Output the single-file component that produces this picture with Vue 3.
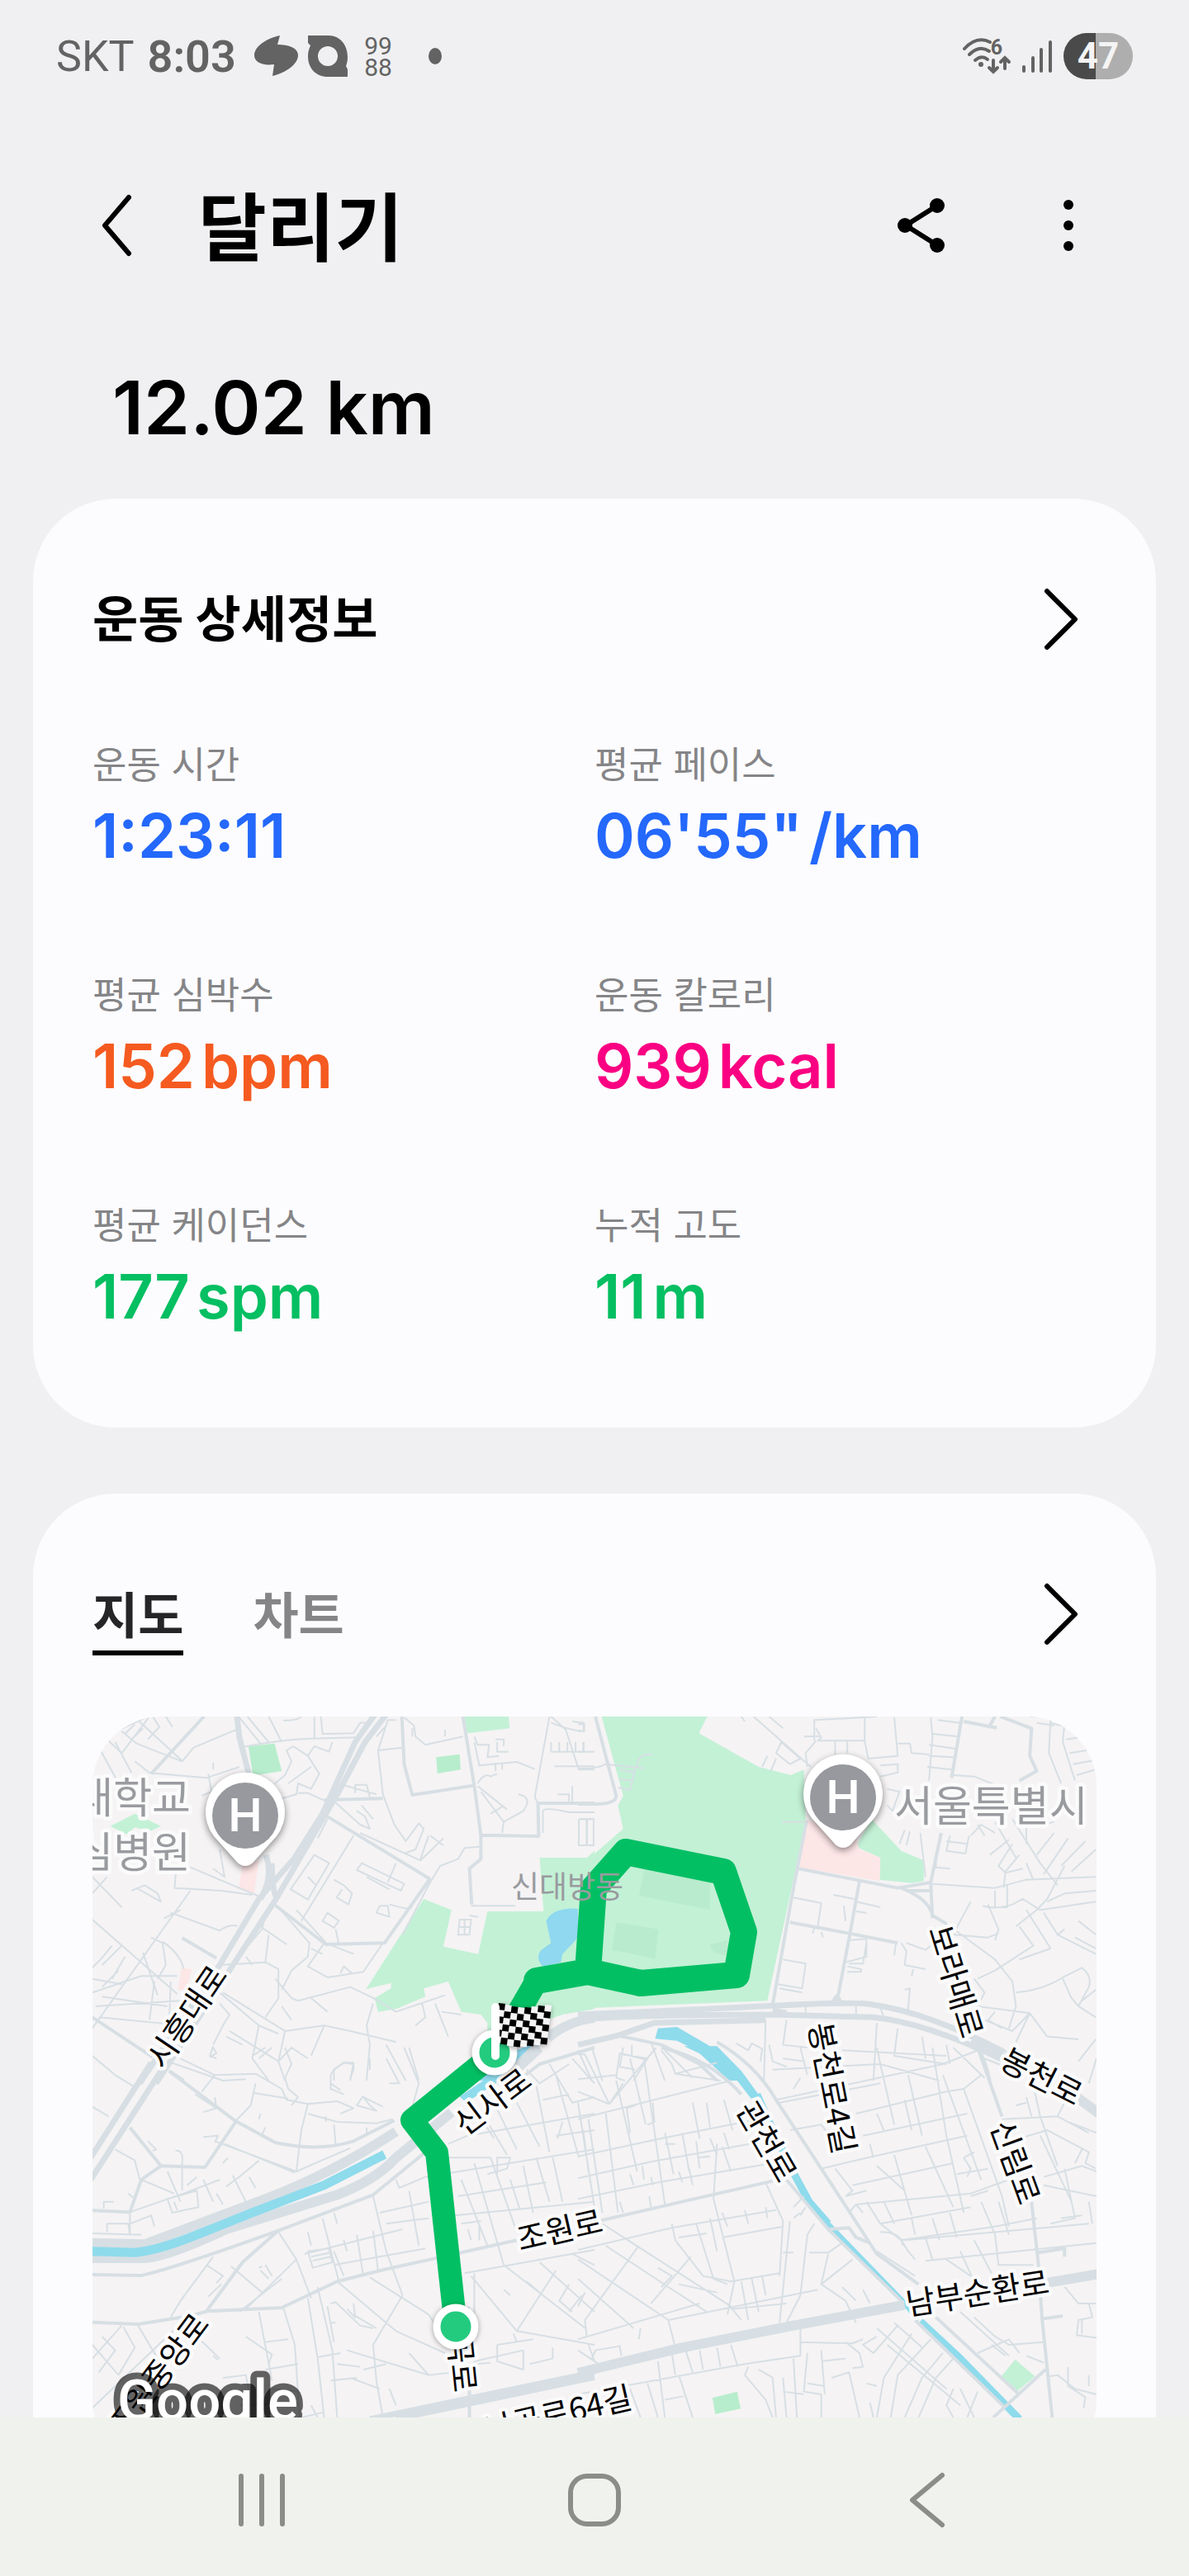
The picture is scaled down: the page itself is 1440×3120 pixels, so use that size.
<template>
  <div class="screen">
    <div class="status-bar">
      <div class="status-left">
        <span class="carrier">SKT</span>
        <span class="clock">8:03</span>
        <svg class="ico-swirl" viewBox="0 0 53 50" aria-hidden="true">
          <path d="M31 0C13 4 0 14 0 24c0 8 9 13 24 11l-2 14c16-4 31-14 31-25 0-9-11-13-25-13z" />
        </svg>
        <svg class="ico-q" viewBox="0 0 48 50" aria-hidden="true">
          <path fill-rule="evenodd" d="M0 0h25c14 0 23 12 23 26 0 5-1 8-2 11l2 4v9H24C10 50 0 40 0 25c0-5 1-8 3-13L0 9zM24 13a12 12 0 1 0 0 24 12 12 0 0 0 0-24z" />
        </svg>
        <svg class="ico-99" viewBox="0 0 34 50" aria-hidden="true">
          <text x="17" y="23" text-anchor="middle">99</text>
          <text x="17" y="49" text-anchor="middle">88</text>
        </svg>
        <span class="dot"></span>
      </div>
      <div class="status-right">
        <svg class="ico-wifi" viewBox="0 0 58 44" aria-hidden="true">
          <path d="M2 13Q17-3 33 5M8 20q12-12 24-4M15 27q8-7 15-1" />
          <circle cx="22" cy="32" r="3" class="solid" />
          <path d="M37 27v14M32 36l5 5 5-5M51 37V24M46 29l5-5 5 5" />
          <text x="41" y="20" text-anchor="middle">6</text>
        </svg>
        <svg class="ico-signal" viewBox="0 0 36 40" aria-hidden="true">
          <path d="M2 33v5M13 22v16M23 12v26M34 3v35" />
        </svg>
        <span class="battery">47</span>
      </div>
    </div>

    <header class="app-bar">
      <button class="icon-btn" aria-label="뒤로">
        <svg viewBox="0 0 96 96"><path d="M64 14L35 48l29 34" /></svg>
      </button>
      <h1>달리기</h1>
      <div class="actions">
        <button class="icon-btn" aria-label="공유">
          <svg viewBox="0 0 96 96">
            <path d="M67 24L29 48l38 24" />
            <circle cx="67" cy="24" r="9" /><circle cx="28" cy="48" r="9" /><circle cx="67" cy="72" r="9" />
          </svg>
        </button>
        <button class="icon-btn" aria-label="더보기">
          <svg viewBox="0 0 96 96" class="dots">
            <circle cx="48" cy="23" r="6" /><circle cx="48" cy="48" r="6" /><circle cx="48" cy="73" r="6" />
          </svg>
        </button>
      </div>
    </header>

    <main class="content">
      <p class="distance">12.02 km</p>

      <section class="card">
        <div class="card-head">
          <h2>운동 상세정보</h2>
          <button class="more-btn" aria-label="운동 상세정보 보기">
            <svg viewBox="0 0 88 88"><path d="M28 10l34 34-34 34" /></svg>
          </button>
        </div>
        <dl class="stats">
          <div v-for="s in stats" :key="s.label" class="stat">
            <dt>{{ s.label }}</dt>
            <dd :class="s.tone">{{ s.value }}<span v-if="s.unit" class="unit">{{ s.unit }}</span></dd>
          </div>
        </dl>
      </section>

      <section class="card">
        <div class="card-head">
          <div class="tabs" role="tablist">
            <button
              v-for="t in tabs"
              :key="t"
              role="tab"
              class="tab"
              :class="{ active: t === activeTab }"
              :aria-selected="t === activeTab"
              @click="activeTab = t"
            >{{ t }}</button>
          </div>
          <button class="more-btn" aria-label="지도 보기">
            <svg viewBox="0 0 88 88"><path d="M28 10l34 34-34 34" /></svg>
          </button>
        </div>

        <svg class="map" viewBox="0 0 1216 912" role="img" aria-label="달리기 경로">
          <rect width="1216" height="912" class="land" />

          <!-- areas first, so every road lies over them -->
          <g v-for="(tile, i) in tiles" :key="'a' + i" :transform="tile.at">
            <path v-for="(a, j) in tile.areas" :key="j" :d="a[1]" :class="a[0]" />
          </g>
          <g v-for="(tile, i) in tiles" :key="'r' + i" :transform="tile.at">
            <path v-for="(r, j) in tile.roads" :key="j" :d="r[1]" class="road" :class="r[0]" />
          </g>

          <g class="road-names">
            <text
              v-for="n in roadNames"
              :key="n.text + n.x"
              :transform="`translate(${n.x} ${n.y}) rotate(${n.turn})`"
              y="13"
            >{{ n.text }}</text>
          </g>
          <g class="place-names">
            <text x="119" y="117" text-anchor="end">대학교</text>
            <text x="119" y="183" text-anchor="end">심병원</text>
            <text x="971" y="127">서울특별시</text>
          </g>

          <g v-for="p in pins" :key="p.x" :transform="`translate(${p.x} ${p.y})`" class="pin">
            <path d="M0 61C-5 61-9 58-12 54L-38 25A48 48 0 1 1 38 25L12 54C9 58 5 61 0 61z" />
            <circle r="40" />
            <text y="19" text-anchor="middle">H</text>
          </g>

          <path class="route" d="M440 739L417 528 387 489 487 408 538 320 600 309" />
          <path class="route loop" d="M538 320L600 309 607 208 646 164 764 188 789 261 780 313 664 323 600 309" />
          <text class="district" x="507" y="220">신대방동</text>

          <circle class="marker" cx="440" cy="739" r="23" />
          <circle class="marker" cx="487" cy="407" r="23" />
          <g class="flag" transform="translate(492 347) rotate(7)">
            <rect
              v-for="c in flagCells"
              :key="c.x + '-' + c.y"
              :x="c.x"
              :y="c.y"
              width="8"
              height="8"
              :class="{ dark: c.dark }"
            />
          </g>
          <path class="pole" d="M488 352v59" />

          <text class="brand" x="30" y="852">Google</text>
        </svg>
      </section>
    </main>

    <nav class="nav-bar">
      <button aria-label="최근 앱">
        <svg viewBox="0 0 72 72"><path d="M11 7v58M36 7v58M61 7v58" /></svg>
      </button>
      <button aria-label="홈">
        <svg viewBox="0 0 72 72"><rect x="7" y="7" width="58" height="58" rx="20" /></svg>
      </button>
      <button aria-label="뒤로 가기">
        <svg viewBox="0 0 72 72"><path d="M54 6L18 36l36 30" /></svg>
      </button>
    </nav>
  </div>
</template>

<script setup>
import { ref } from 'vue'

const tabs = ['지도', '차트']
const activeTab = ref('지도')

const stats = [
  { label: '운동 시간', value: '1:23:11', tone: 'blue' },
  { label: '평균 페이스', value: '06\'55"', unit: '/km', tone: 'blue' },
  { label: '평균 심박수', value: '152', unit: 'bpm', tone: 'orange' },
  { label: '운동 칼로리', value: '939', unit: 'kcal', tone: 'pink' },
  { label: '평균 케이던스', value: '177', unit: 'spm', tone: 'green' },
  { label: '누적 고도', value: '11', unit: 'm', tone: 'green' }
]

const pins = [
  { x: 185, y: 120 },
  { x: 909, y: 98 }
]

const roadNames = [
  { text: '시흥대로', x: 115, y: 364, turn: -56 },
  { text: '신사로', x: 485, y: 467, turn: -37 },
  { text: '조원로', x: 566, y: 623, turn: -13 },
  { text: '조원중앙로', x: 80, y: 798, turn: -53 },
  { text: '난곡로', x: 445, y: 766, turn: 84 },
  { text: '난곡로64길', x: 564, y: 845, turn: -13 },
  { text: '봉천로4길', x: 895, y: 450, turn: 79 },
  { text: '보라매로', x: 1045, y: 321, turn: 73 },
  { text: '봉천로', x: 1149, y: 437, turn: 27 },
  { text: '관천로', x: 816, y: 515, turn: 60 },
  { text: '신림로', x: 1117, y: 540, turn: 70 },
  { text: '남부순환로', x: 1072, y: 699, turn: -9 }
]

// each column sits a little lower or higher, which gives the flag its wave
const flagWave = [0, 1, 2, 2, 1, -1, -3, -5]
const flagCells = []
flagWave.forEach((lift, col) => {
  for (let row = 0; row < 6; row++) {
    flagCells.push({ x: col * 8, y: row * 8 + lift, dark: (row + col) % 2 === 0 })
  }
})

// four map tiles, each in its own grid: north-west, north-east, south-west, south-east
const tiles = [
  {
    at: 'translate(-12 -19) scale(.3954 .3333)',
    areas: [
      ['park', 'M1400 570H1568V1120L1470 1140 1240 1240 1240 1170 1220 1140 1160 1130 1120 1020 1045 1045 1050 1075 960 1120 905 1130 895 1080 945 1045 945 1025 868 1048 1045 720 1130 760 1105 893 1212 920 1240 765 1412 765z'],
      ['park', 'M1568 545L1540 575V620H1568z'],
      ['park-dark', 'M508 165L588 155 610 255 522 272zM1083 205L1155 194 1158 250 1087 264z'],
      ['park', 'M1170 57H1305L1308 100 1178 118zM85 455L160 410 240 455 205 475 160 460 135 485z'],
      ['lake', 'M1420 800Q1440 750 1515 755L1540 800 1510 870 1470 920 1465 950 1410 965Q1385 935 1405 905L1435 880z'],
      ['lake', 'M1210 1380L1330 1270 1390 1240 1290 1380z'],
      ['clinic', 'M490 590L540 580 525 700 478 685zM303 970L335 975 318 1050 292 1050z']
    ],
    roads: [
      ['wide', 'M895 50L835 150 735 410 650 570 540 720 420 960 175 1390M930 50L865 150 780 340 590 725 450 980 225 1390'],
      ['wide', 'M473 57L480 130 510 270M562 560Q585 640 545 720M580 590Q580 680 592 710'],
      ['wide', 'M1568 1145Q1470 1160 1400 1240L1270 1390M1568 1160Q1490 1170 1430 1230'],
      ['mid', 'M372 57L210 265M978 57L985 230 1010 342 1195 308M1165 57L1200 310 1220 488 1397 492 1395 372H1568M1220 490V575L1185 610 1192 740M735 410L1065 648M585 738L745 885 925 880 1065 645M305 862L410 935M30 1150L215 1295M265 1345L310 1380M740 360L920 355'],
      ['thin', 'M480 60L545 155M505 57L570 150M570 57L610 150M710 57V135M480 170Q610 140 700 137L845 133M730 57L735 120 830 118 850 80 880 80M615 72Q660 72 670 57M765 150L755 185 710 165 690 200 645 165 625 180 640 220 620 270 590 300M690 200L725 265 700 320 660 300 655 340 610 355M660 335L690 335 745 365M630 300L700 240'],
      ['thin', 'M30 150L200 57M75 140L120 190 205 57M120 110L165 155 305 220 340 170 480 100M160 60L305 218M215 57L235 95 200 140M255 57L275 95M100 150L150 262M55 180L115 310M160 220L205 262 380 280 480 240M385 265L395 330 365 345M400 225L400 250M130 120L160 85M150 140L185 100'],
      ['thin', 'M978 170L905 180 920 340 955 450 990 510 1030 445 1045 465 1020 540 985 555M905 180L935 70 960 70M900 130L930 90M985 60L1015 90 1020 130 1050 160 1165 130M1110 105V130M1010 100V130M1200 130L1210 160H1245L1240 205 1275 200M1200 150L1215 235 1330 222 1385 248M1270 150V185H1305M1265 140H1290V165M1265 225V255M1285 225V250M1210 300Q1230 260 1250 275L1270 265M1210 310L1300 395M1335 340Q1380 350 1350 400L1290 440 1285 480M1220 330L1290 440M1250 410L1285 385'],
      ['thin', 'M1430 57L1385 350 1395 372M1435 57L1480 105 1520 250H1568M1435 80Q1500 110 1535 110V80L1500 75M1435 185H1568M1435 150V185M1460 150V185M1485 150V185M1510 150V185M1535 150V185M1445 238H1568M1455 340H1490V365M1500 310V365M1410 480V400Q1415 385 1490 405H1568M1520 430V525H1568M1545 430V525M1520 430H1568'],
      ['thin', 'M835 335V305H870L880 350M775 370L850 450 880 465 865 420 840 400M780 300L900 340M855 380L890 430M850 480L1035 580 1105 500M1065 490L1105 525M1060 490L1035 575M1215 530L1170 535 1150 575 1095 600 1060 670 980 850M750 430L720 500M830 490L670 800M960 590L935 660M710 560L755 590 690 722 637 685zM690 640L715 670M855 590L985 665 975 690 840 615zM870 640L940 685M770 650L800 670 825 700 815 740 778 715 795 685M940 740L990 755 1010 750M935 745L940 785 900 770 910 745zM750 770L785 800 770 825 735 800zM775 830L785 885'],
      ['thin', 'M30 640L120 750M75 640L30 700M165 680L240 730 230 700 190 670 150 690M300 590L540 710M420 540L435 640 400 610M285 630L282 680 425 690 520 705M330 690L30 1190M30 795L290 1065M250 790L300 760M270 770L420 835Q450 810 475 818M210 860L245 880 255 960 230 1010M245 875Q300 920 310 975M185 915L230 1070M90 890L55 940 30 970M120 890L60 960M130 930L90 1010M110 980L60 1040M420 960L560 950 600 975V1080L560 1150M470 940L550 830 560 770M545 820L625 885M600 750L695 880 690 930 640 980 610 1050M500 930L520 960M570 850L560 950M655 760L750 885M740 880L690 965 750 1005 860 985 920 880M700 900L735 920M765 890L830 920M790 990L800 965 825 990'],
      ['thin', 'M1185 780L1212 785M1155 795H1190L1185 850H1150zM1170 795V850M1150 822H1188M1190 745H1325'],
      ['thin', 'M40 1110L300 1090M60 1075L260 1110M50 1150L270 1175M30 1060L180 1000 290 1000M270 1020L265 1180M220 1020L205 1160M400 1040L540 1180 600 1210M420 1100L450 1140 430 1180 400 1250M430 1060L620 1200 740 1180 820 1200 960 1240M590 1010L640 1080 660 1090 820 1040 890 1080 960 1130M700 1080L750 1130M610 1110L640 1160M960 1130L1110 1070M1040 1100L1050 1150 1020 1180M1080 1100L1120 1220M1100 1130L1160 1140M890 1100L870 1180 880 1250M450 1200L600 1310 640 1260 690 1300M540 1180L520 1300 570 1380M400 1255L390 1290 410 1300M440 1220L490 1250M620 1200L600 1310 620 1380M770 1380V1340L800 1315H830L820 1380M880 1250L870 1380M930 1250L990 1380M1000 1260L1030 1380M740 1180L700 1290M330 1150L300 1240M260 1310L430 1380 500 1375M30 1010L120 1030']
    ]
  },
  {
    at: 'translate(588 -19) scale(.4209 .3333)',
    areas: [
      ['park', 'M68 57H372L348 118 520 240 612 270 650 250 655 430 625 620 545 1090 0 1118V575H30L130 465 115 380 130 345z'],
      ['park', 'M845 430L930 545 995 580V655L960 662 868 650 870 570 800 530z'],
      ['clinic', 'M655 430L800 500 810 540 870 570 868 655 638 605z'],
      ['park-shade', 'M190 610L380 660V760L176 708zM110 805L232 830 222 937 97 905zM380 885L430 870V925Q380 920 380 885z'],
      ['river', 'M230 1190L285 1185 380 1255 430 1310 485 1380H435L340 1270 285 1235 222 1228z']
    ],
    roads: [
      ['wide', 'M0 1140Q300 1125 560 1108T850 1105Q1000 1130 1225 1275M0 1160Q160 1140 560 1140L850 1150Q1000 1170 1215 1300M560 1125L600 1135M0 1250L110 1218 220 1170 540 1160'],
      ['mid', 'M658 435L620 680 560 1105M635 610L920 680 1015 660 1045 480M810 655L785 830 745 1095M610 805L780 845 920 880M930 680Q1010 720 1020 780L1060 810M950 690H1015M1015 660L1020 790M1105 57L1075 280M1110 75L1205 98M1215 57L1305 100 1300 200 1320 255 1270 290M1185 90L1200 57M50 57L110 345Q110 372 60 375H0M1135 1230Q1170 1290 1185 1380M110 1215L240 1250 350 1320 400 1380M745 1070L730 1100M745 1070L760 1100'],
      ['thin', 'M0 85H18V110H0M15 150V185H0M0 245Q50 250 80 230L190 245M170 240Q170 190 215 195M165 240L150 325 115 315M120 250L165 260M118 285L160 290M5 430H45V525H5M25 430V525M585 440H650'],
      ['thin', 'M470 57L480 75M505 57L670 240M550 57L590 100M585 150L640 210 610 230 570 190zM530 240L545 200M555 255L570 210M650 130L695 128M680 145L680 70 860 57M685 100L700 135 690 145H825V57M685 145L655 190 660 240M740 145V205M775 145V190M825 145L835 210 920 200 910 60M920 155H955L960 190 1010 195M870 235L920 230V260L870 275M1015 60L1020 130 1010 290M1035 70L1100 80M1020 120L1095 130M1010 160L1090 175M1010 200L1080 205M1005 240L1075 250M890 320L925 330 905 400 890 380M940 470L925 520M955 475L945 525'],
      ['thin', 'M1300 57L1360 57 1355 190 1390 300M1360 80L1420 100M1400 80L1395 150 1430 290M1430 110L1460 90M1405 140L1480 125M1415 190L1490 175M1425 230L1490 215M1435 270L1490 250M1320 80L1370 90M1080 270L1140 275 1210 310M1200 440L1260 570M1250 430L1330 590M1290 440L1290 520M1200 480L1160 450 1130 490M1150 450L1170 490M1070 490L1060 545 1115 555 1125 490M1060 510L1120 520M985 480L1000 640M1030 570L1030 605 1070 610M1020 665L1200 680 1290 650 1490 640M1240 505L1185 560M1250 520L1210 600 1230 625 1280 610M1270 560L1230 620 1225 680M1235 670V750H1210M1200 690V750M1290 590L1310 650M1330 590L1380 670M1370 480L1320 560M1410 500L1340 630M1460 510L1390 600M1490 540L1420 620M1310 460L1370 440M1400 600L1350 720 1320 760 1260 820M1490 690L1400 700 1350 730M1165 745Q1200 760 1250 740L1280 720 1330 760 1490 730'],
      ['thin', 'M620 715L700 735 690 820M735 705L795 720M765 745L770 800M800 730L870 750M800 765L830 770M680 825L675 845M700 840L705 860M780 870L830 865V930L770 950M830 880L820 955H780M775 965L815 975V985H775M590 940L655 955 645 1045 575 1030M580 1045L645 1060M915 880L910 925M930 880L945 910 940 960 1000 975M945 880L1000 905 1050 850M965 975L960 1000M940 1050L955 1045 950 1120 935 1130M870 1115L880 1150 905 1160M655 1110V1145M800 1110V1140M1130 730L1100 800 1080 850 1180 860 1210 845M1060 810L1200 940 1250 1020 1260 1110 1240 1190M1180 740L1210 830 1200 870M1270 820L1310 890 1200 980 1150 1010M1290 760L1360 900M1340 770L1380 850 1490 920M1360 900L1270 940M1380 850L1400 830M1430 860L1490 900M1440 800L1490 850M1140 1010L1170 1060 1150 1110 1300 1135 1250 1200 1170 1160M1260 1060Q1340 1050 1395 1005L1450 970Q1480 1000 1470 1040L1440 1110 1420 1080 1395 1010M1440 1110L1490 1150M1300 1135L1350 1220 1440 1230M1300 1135L1260 1240M1490 1050L1450 1090M1200 1130L1180 1160 1220 1190'],
      ['thin', 'M540 1160L535 1380M455 1245L490 1270 500 1245 530 1265 525 1310M600 1160L590 1250 660 1260M860 1170L850 1380M920 1190L910 1290 1060 1320M990 1220L1000 1300M1060 1250L1070 1320M760 1270L1060 1290M590 1300L650 1310M550 1250L560 1310 600 1330M1170 1300L1230 1330M0 1270L40 1380M40 1260L70 1380M130 1260L120 1330 165 1340M130 1285L200 1300 160 1380M210 1240L250 1380M250 1270L330 1370M155 1250V1290M1490 1230L1440 1310']
    ]
  },
  {
    at: 'translate(-12 401) scale(.3954 .3333)',
    areas: [
      ['river', 'M1155 178L1340 30 1400 0 1290 110 1175 200z']
    ],
    roads: [
      ['bank', 'M20 710L190 715Q360 640 560 550T960 305M20 765H190Q260 760 440 660L780 535Q900 480 960 400L1130 235M1300 110L1400 0'],
      ['water', 'M20 740L160 745Q220 740 330 690L520 600 740 500 925 388'],
      ['wide', 'M210 55L25 400M240 85L25 480'],
      ['wide', 'M880 1350L1568 1180M960 1350L1568 1198'],
      ['mid', 'M20 825L180 828Q260 810 600 665L890 535 1050 380M270 90L470 268 590 345Q720 380 830 340L955 265M470 268L375 435 240 430 145 290M240 430L180 480 145 598 30 592M30 998L170 1005 330 975 380 958 610 945 780 850 920 808 1330 700M595 670L490 780 375 965M1185 1230V1344M1280 170L1400 60 1568 0'],
      ['thin', 'M30 30L100 100 155 140M30 215L80 250M400 0L410 20 390 35M300 40L405 100 365 160M405 100L530 95 610 150 625 190 690 205 780 195 830 220 790 240M405 180L410 220 370 235M345 170L410 220M530 130L515 210 470 265M525 165L630 185M620 0L640 60 620 110 630 150 660 180 640 210M690 205L670 300 655 450M690 240L780 270 900 275 950 260M545 240L540 260M560 290L550 315M745 250V270M770 280L775 350M860 175L840 210 900 230 880 210 860 180 920 215M760 100L770 80 800 55 830 60V80L820 110M760 100V150L800 170M760 130L790 155M930 40L970 130 940 130M880 40V80M985 0L1030 130 1010 215M870 290V315M520 30L560 0M540 40L580 0'],
      ['thin', 'M100 370L160 410 175 480M200 340L225 370 215 375M285 375Q310 370 305 420V520M370 325L415 320 405 345M405 340L655 450 820 365M435 350L650 455M445 400L430 420M540 410L480 470 440 505M260 450L300 560M180 480L280 530M350 470L320 500M145 598L310 530 420 480M75 670V640L140 640 145 680M145 640L210 610 220 650M145 600V680M30 675L180 680M65 585V560L95 560M140 530L155 545M260 550L350 520 355 580 275 600zM280 560L290 590M460 465L500 560M510 470L530 510M410 530L430 570M370 480L400 560'],
      ['thin', 'M890 540L930 740 980 900M960 480L970 510 1050 470 1568 370M910 600L1060 560M1000 520L1030 720M930 640L1060 620M690 670L700 720M600 670L655 770 700 910M735 620L785 850M770 600L780 640M690 740L755 730 765 780 705 800zM700 760L760 745M705 775L760 760M800 700L810 740M680 750L980 660M840 680L860 830M890 665L905 810M770 790L1050 730M770 740L800 830M550 795L540 800M545 810L570 840M560 790L580 830M455 795L550 890M380 790L430 830 410 855M425 860L385 905M270 980L300 920 400 760M330 970L30 1310M610 840L480 960M655 770L500 950M540 960L580 1210M615 945L650 1080 665 1344M690 910L720 1130 740 1344M720 870L765 1100 780 1344M560 1070L630 1060M720 1125L790 1110M980 900L890 1080 900 1210 920 1344M780 850L960 1030 1110 1110M880 835L1060 970 1110 1060'],
      ['thin', 'M750 940L770 1070M760 930L775 925 850 1010 890 1020M810 950L835 980 830 930M835 975L900 1020M760 1000H775M780 1150L850 1160M860 1170L930 1150M760 1210L840 1200M30 1080L110 1190M60 1050L100 1100 50 1180M125 1015L160 1090 110 1190M170 1010L230 1130M120 1010L30 1130M350 1050L420 1130M400 1120L415 1135M500 1050L580 1115 570 1150M430 1200L500 1190 510 1250M560 1170L660 1150M580 1240L660 1250M480 1300L660 1290M820 1200L910 1240M1060 1190L810 1100M1000 1110L1060 1190 1140 1180M940 1240L960 1300'],
      ['thin', 'M1070 400L1250 400M1160 480L1240 720M1200 420L1290 790M1250 400L1330 670M1240 460L1300 440 1310 400 1270 400V460M1310 480L1340 590M1350 430L1380 600M1390 400L1430 560M1440 400L1470 560M1140 610L1568 560M1150 540L1420 490M1160 640L1220 630M1180 660L1190 700M1215 640V700M1120 350L1180 320M1180 320L1568 240M1190 200L1260 330M1230 250L1300 390M1260 200L1330 370M1330 200L1400 360M1390 140L1430 380M1450 100L1520 400M1360 80L1400 130 1490 60M1430 60L1500 200 1568 180M1500 40L1568 130M1410 190L1490 170M1450 320L1568 300M1455 330L1470 270'],
      ['thin', 'M1170 820L1568 735M1190 830L1330 1030 1568 1080M1200 820V1140L1350 1100M1290 790L1540 1020M1400 780L1568 960M1450 810L1330 1030M1290 880L1310 900M1360 850L1400 890M1490 860L1460 920 1500 960M1530 900L1490 960M1270 1080L1380 1060M1270 1080V1140L1350 1170V1100M1440 1090V1130L1370 1150M1550 1080L1568 1140M1320 1040L1330 1070M1210 1150L1250 1145M1500 750L1568 790M670 1344L740 1325M700 1300L720 1344']
    ]
  },
  {
    at: 'translate(588 401) scale(.4209 .3333)',
    areas: [
      ['river', 'M305 -5H400L470 85 522 175 498 185 455 115 390 45z'],
      ['park', 'M1258 1133L1315 1195 1262 1250 1218 1195z'],
      ['park-dark', 'M387 1273L458 1250 468 1312 395 1332z']
    ],
    roads: [
      ['river-line', 'M515 170Q560 300 620 455L665 560 720 640'],
      ['river-line slim', 'M700 615L930 915 980 990'],
      ['river-line', 'M985 995L1100 1130 1270 1350'],
      ['bank', 'M0 1182L300 1090 620 1010 940 935M1350 855L1510 820'],
      ['bank', 'M1130 -20L1230 40M1430 175L1510 250'],
      ['mid', 'M240 0Q380 40 470 170M600 480L720 660 930 920M400 -20Q510 60 570 190L700 440 860 750 980 860M720 660L780 655 800 690 840 710M970 990L1230 1310M1030 980L1265 1255M60 630L300 560 560 485M1150 0L1220 250M1305 560L1325 790 1335 980 1365 1350M1325 745L1400 730V760M1340 985L1395 975M1345 1170L1195 1344'],
      ['thin', 'M0 115L110 100M0 25H20L90 205 225 0M0 160L90 205 130 130M120 20L110 110 135 120M120 20L200 45M240 10L270 60 280 95 400 55M280 95L410 120M0 260L250 180 440 120M0 395L240 330 500 265M0 475L210 415 540 340M0 550L230 490 560 420M0 735L270 655 570 590M30 260L70 600M80 240L115 600M110 120L170 450M190 40L250 570M150 40L195 280M165 210L140 220 150 310M215 200L220 270 200 280M330 200L350 330M370 200L380 290M420 190L445 300M250 310L275 460M300 310L320 450M345 400L380 395M340 340L350 440M380 330L400 390M420 310L435 370M0 200L50 600M15 300L30 450M150 460L160 500M185 430L190 480M210 470L215 500M250 350H280'],
      ['thin', 'M400 350L390 550 450 850 430 970M415 360L440 450M540 490L590 630 580 830M290 450L300 490M320 440L330 500M120 560L130 600M205 540L210 580M270 640L280 700 360 830 440 850M340 640L390 840 430 860M380 620L400 740M415 690L590 650M290 690L370 675M415 600L430 650M480 590L490 640M540 580L545 620M650 540L620 580M640 600L620 620M655 580L640 610M610 630L580 1000M680 640L660 680 640 900 600 1000M590 745H620M665 745H720L760 710M720 750L700 860 770 920 800 1000M700 860L790 770M440 850L580 820M470 850L490 990M500 840L520 960M530 830L540 900M430 930L470 990M440 950L600 930M350 930L0 1060M690 880L260 990 280 1090M760 870L800 920M820 880L840 930'],
      ['thin', 'M70 640L230 770 440 940M80 720L260 870 370 960M0 770L260 990M0 840L160 1020M175 720L20 990M325 760L210 930M230 800L270 830 240 870M290 860L400 890M20 890L0 940M20 990L25 1050M180 1020L175 1060M40 1130L50 1100 120 1085 125 1120M0 1100L60 1150M230 1140L250 1344M270 1110L280 1190M310 1100L330 1180M350 1100L360 1170M400 1090L410 1160M440 1080L460 1160M0 1260L480 1150 640 1120M150 1240L180 1344M200 1220L230 1344M290 1190L330 1344M250 1280L310 1265M480 1190L540 1280 560 1344M490 1160L480 1190M520 1170L560 1200 570 1344M590 1200L600 1344M620 1130L630 1344M660 1110L650 1250 700 1260 700 1344M700 1100L710 1260M770 1070L810 1110 820 1160 790 1165M640 1070L790 1075 820 1060M640 1120V1010M700 1140L770 1130M660 1220L710 1230M730 1200L780 1180 810 1344M590 1250L650 1260'],
      ['thin', 'M560 80L870 60 1040 120M580 200L870 130M610 300L700 280 730 330M570 190L1050 60 1170 0M620 150L640 110M640 0L660 100M860 0L870 60 910 280M1020 0L1060 320M1080 0L1170 110M950 100L990 320M800 240L1060 160 1110 150M820 320L1120 240M700 440L850 395 1120 320M850 400L840 350M860 240L880 300M940 190L960 300M1110 150L1220 540M1060 320L1110 600M1000 360L1080 580M910 390L960 610M860 430L940 520M1050 100L1160 480M740 440L790 520 770 540M700 440L740 510M790 500L1080 420M800 570L1130 530 1240 480M770 540L830 520M820 600L800 570 780 600M830 560L870 640 1130 580M880 560L910 640M960 620L970 680M1020 620L1040 700M1070 600L1090 690M870 640L930 700 1200 650 1320 620M940 700L1470 640M1000 775L1492 710M1000 690L1020 770M930 700L950 740 970 770M860 740L970 830M870 670Q930 670 935 720M1060 770L1130 830M1100 740L1140 850M1140 700L1190 820M1160 560L1200 680 1210 790 1310 790M1220 540L1240 650'],
      ['thin', 'M1305 250L1290 180M1300 80L1330 250 1380 430M1220 260L1380 250 1470 310M1380 250L1420 150M1410 270L1492 310M1260 210L1290 200M1270 330L1350 300 1470 380 1460 420 1490 440M1330 320L1420 560M1340 470L1450 430 1492 450M1340 500L1492 540M1400 440L1430 620 1360 640M1390 620L1450 610M1470 560L1480 640M1430 420L1450 370M1130 540L1180 520M1110 400L1130 440 1120 470M1140 380L1110 400M1210 560L1240 680M1160 100L1110 150M1210 0L1300 60M1090 460L1180 440M1470 130L1492 40'],
      ['thin', 'M860 1020L1060 1240M910 1000L990 1090M860 1050L820 1080 850 1110 920 1010M960 1040L880 1200 860 1344M1015 1060L920 1190 900 1344M1050 1110L990 1200 940 1344M1080 1130L1030 1200 980 1344M890 1080L1100 1300M1080 1240L1060 1300 1080 1344M1100 1240L1140 1344M1150 1250L1120 1344M1140 980L1200 1050 1240 1080 1340 1070M1100 960L1240 1120M1150 1110L1240 1060M1190 1080L1230 1120M1240 1060L1270 1110M1290 1120L1340 1145M1400 870L1440 930 1490 930M1470 930L1480 980 1440 990 1435 1045 1492 1055M1450 990V1040M1355 1195L1380 1190 1430 1240 1492 1260M1410 1160V1230L1460 1270 1455 1310M1470 1190V1230M840 1290L850 1344M830 1220L860 1230']
    ]
  }
]
</script>

<style>
html,
body,
#app {
  height: 100%;
}

body {
  margin: 0;
  background: #f0f0f2;
}
</style>

<style scoped>
.screen {
  display: flex;
  flex-direction: column;
  height: 100%;
  overflow: hidden;
  background: #f0f0f2;
  color: #000;
  font-family: Inter, 'Noto Sans CJK KR', sans-serif;
}

h1,
h2,
p,
dl,
dd {
  margin: 0;
}

button {
  padding: 0;
  border: 0;
  background: none;
  color: inherit;
  font: inherit;
  cursor: pointer;
}

svg {
  display: block;
}

/* status bar */
.status-bar {
  display: flex;
  flex: none;
  align-items: center;
  justify-content: space-between;
  height: 136px;
  padding: 0 68px;
  color: #636363;
  font-family: Roboto, sans-serif;
  font-size: 52px;
}

.status-left,
.status-right {
  display: flex;
  align-items: center;
}

.carrier {
  margin-right: 16px;
}

.clock {
  margin-right: 22px;
  font-size: 54px;
  font-weight: 600;
}

.ico-swirl,
.ico-q,
.ico-99 {
  height: 50px;
  margin-right: 12px;
  fill: #636363;
}

.ico-99 {
  margin-left: 8px;
  overflow: visible;
  font-size: 30px;
}

.dot {
  width: 16px;
  height: 20px;
  margin-left: 32px;
  border-radius: 50%;
  background: #636363;
}

.ico-wifi,
.ico-signal {
  margin-right: 14px;
  overflow: visible;
  fill: none;
  stroke: #636363;
  stroke-width: 4;
  stroke-linecap: round;
}

.ico-wifi {
  width: 58px;
}

.ico-wifi .solid,
.ico-wifi text {
  fill: #636363;
  stroke: none;
  font-size: 25px;
  font-weight: 700;
}

.ico-signal {
  width: 36px;
}

.battery {
  width: 84px;
  border-radius: 28px;
  background: linear-gradient(90deg, #4a4a4a 47%, #aeaeae 47%);
  color: #f4f4f4;
  font-size: 44px;
  font-weight: 700;
  line-height: 56px;
  text-align: center;
}

/* app bar */
.app-bar {
  display: flex;
  flex: none;
  align-items: center;
  height: 274px;
  padding: 0 98px 0 92px;
}

.app-bar h1 {
  margin-left: 52px;
  padding-top: 8px;
  font-size: 90px;
  font-weight: 700;
  line-height: 120px;
}

.actions {
  display: flex;
  gap: 82px;
  margin-left: auto;
}

.icon-btn svg {
  width: 96px;
  height: 96px;
}

.icon-btn path,
.more-btn path {
  fill: none;
  stroke: #000;
  stroke-width: 6;
  stroke-linecap: round;
  stroke-linejoin: round;
}

.content {
  flex: 1;
  min-height: 0;
  padding: 4px 40px 0;
  overflow: hidden;
}

.distance {
  margin: 0 0 30px 96px;
  font-size: 90px;
  font-weight: 600;
  line-height: 160px;
}

/* cards */
.card {
  margin-bottom: 80px;
  padding: 74px 72px 106px;
  border-radius: 100px;
  background: #fcfcfe;
}

.card-head {
  display: flex;
  align-items: center;
  justify-content: space-between;
  height: 144px;
}

.card-head h2 {
  font-size: 60px;
  font-weight: 700;
  line-height: 84px;
}

.more-btn svg {
  width: 88px;
  height: 88px;
}

.stats {
  display: grid;
  grid-template-columns: 1fr 1fr;
  row-gap: 109px;
  margin-top: 73px;
}

.stat dt {
  color: #858587;
  font-size: 45px;
  line-height: 64px;
}

.stat dd {
  font-size: 74px;
  font-weight: 600;
  line-height: 106px;
}

.unit {
  margin-left: 8px;
}

.blue { color: #2468fc; }
.orange { color: #f55a20; }
.pink { color: #fa0082; }
.green { color: #05bf62; }

.tabs {
  display: flex;
  gap: 84px;
}

.tab {
  padding-top: 10px;
  border-bottom: 6px solid transparent;
  color: #858587;
  font-size: 60px;
  font-weight: 700;
  line-height: 84px;
}

.tab.active {
  border-color: #000;
  color: #252527;
}

/* map */
.map {
  width: 100%;
  margin-top: 52px;
  border-radius: 84px;
  overflow: hidden;
}

.land { fill: #f5f3f4; }
.park { fill: #c3f1d6; }
.park-dark { fill: #b7edcc; }
.park-shade { fill: #b9ecce; }
.lake { fill: #8fd8ef; }
.river { fill: #8edbec; }
.clinic { fill: #fde6e6; }

.road {
  fill: none;
  stroke: #d7dfe4;
  stroke-linejoin: round;
  vector-effect: non-scaling-stroke;
}

.thin { stroke-width: 2px; }
.mid { stroke-width: 4px; }
.wide { stroke-width: 7px; }
.bank { stroke-width: 12px; }

.road.water {
  stroke: #8edbec;
  stroke-width: 11px;
}

.road.river-line {
  stroke: #8edbec;
  stroke-width: 9px;
}

.road.slim { stroke-width: 6px; }

.road-names text,
.place-names text,
.district {
  font-family: 'Noto Sans CJK KR', sans-serif;
}

.road-names text,
.place-names text {
  paint-order: stroke;
  stroke: #fbfbfc;
  stroke-width: 9px;
  stroke-linejoin: round;
}

.road-names text {
  font-size: 38px;
  text-anchor: middle;
}

.place-names text {
  fill: #999b9f;
  font-size: 51px;
}

.district {
  fill: #999b9f;
  font-size: 37px;
}

.pin path {
  fill: #fff;
  filter: drop-shadow(0 3px 4px rgba(0, 0, 0, 0.45));
}

.pin circle { fill: #97999e; }

.pin text {
  fill: #fff;
  font-family: Inter, sans-serif;
  font-size: 55px;
  font-weight: 600;
}

.route {
  fill: none;
  stroke: #03bf64;
  stroke-width: 28;
  stroke-linecap: round;
  stroke-linejoin: round;
}

.loop { stroke-width: 32; }

.marker {
  fill: #23cb7f;
  stroke: #fff;
  stroke-width: 9;
  filter: drop-shadow(0 1px 3px rgba(0, 0, 0, 0.35));
}

.flag {
  fill: #f4f4f4;
  filter: drop-shadow(0 2px 3px rgba(0, 0, 0, 0.35));
}

.flag .dark { fill: #000; }

.pole {
  stroke: #fff;
  stroke-width: 10;
  stroke-linecap: round;
}

.brand {
  fill: #fff;
  paint-order: stroke;
  stroke: #000;
  stroke-opacity: 0.6;
  stroke-width: 16px;
  stroke-linejoin: round;
  font-family: Roboto, sans-serif;
  font-size: 69px;
  font-weight: 500;
}

/* system navigation */
.nav-bar {
  display: flex;
  flex: none;
  align-items: center;
  height: 192px;
  padding: 0 116px;
  background: #f0f2ed;
}

.nav-bar button {
  display: flex;
  flex: 1;
  justify-content: center;
  padding: 64px 0 56px;
}

.nav-bar svg {
  width: 72px;
  height: 72px;
  fill: none;
  stroke: #8b8d88;
  stroke-width: 6;
  stroke-linecap: round;
  stroke-linejoin: round;
}
</style>
